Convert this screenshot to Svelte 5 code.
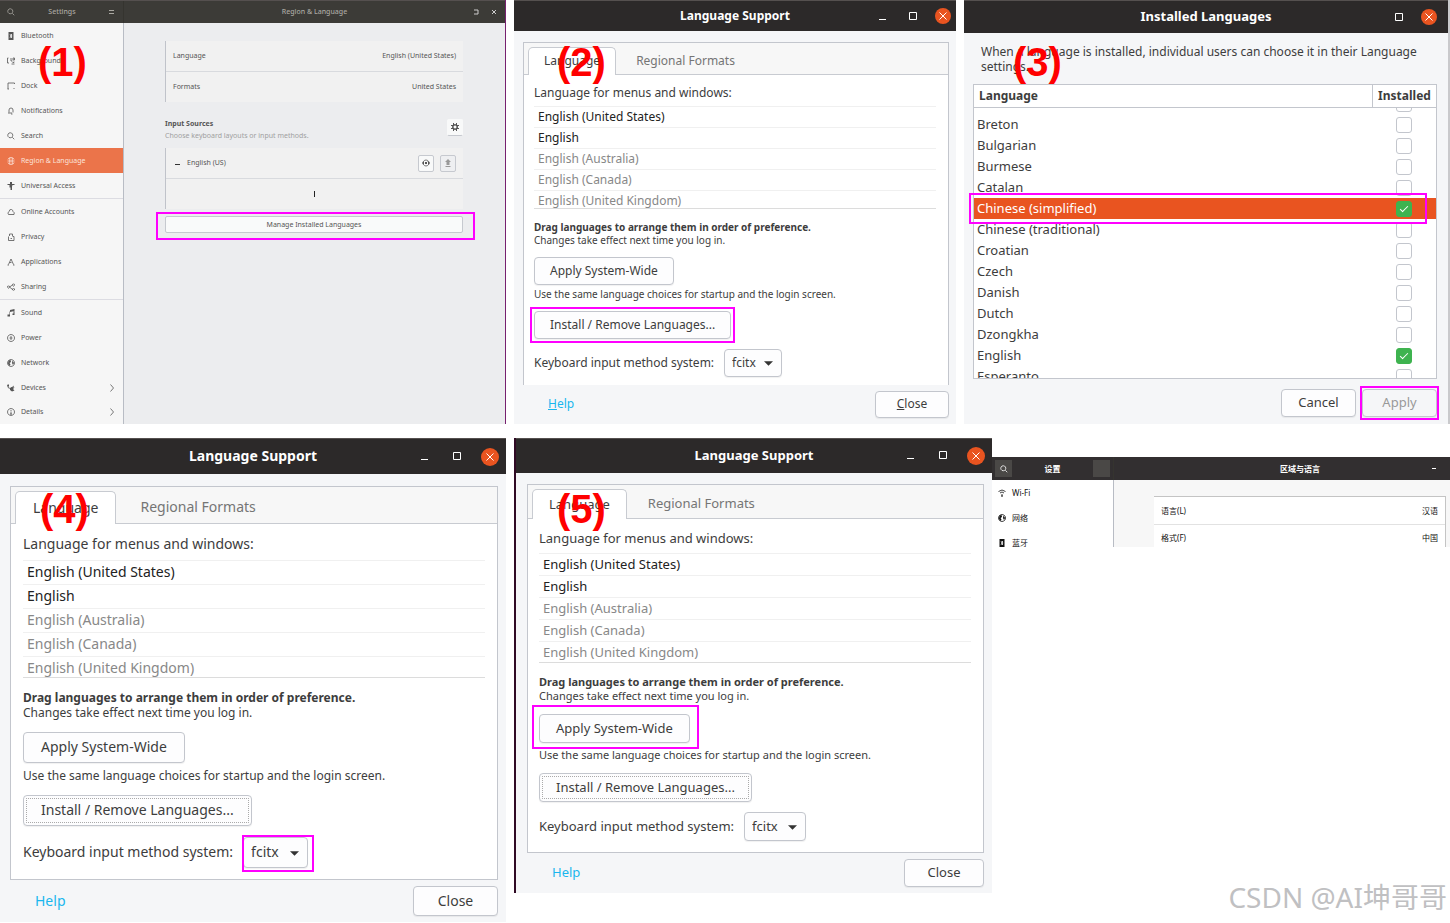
<script>
    // 16x16 symbolic icons, stroke = outline, fill = solid parts
    const icons = {
        bluetooth: { fill: 'M3 0h10v16H3z', cut: 'M6 5l4 5-2 2V4l2 2-4 5' },
        background: { stroke: 'M3 2H1v10h3M9 14h6M8 2v6h3M12 2h3v4h-3zM11 11h3V9' },
        dock: { stroke: 'M2 14V2h13v2M1 14h3M14 12v2' },
        bell: { stroke: 'M4 11V6q0-4 4-4t4 4v5M2 12h8M8 14h3' },
        search: { stroke: 'M6.500 1.500a5 5 0 1 0 .1 0M10.500 10.500l4 4' },
        region: { stroke: 'M2 5q1-4 6-4t6 4M1 8h14M2 11q1 4 6 4t6-4M5.500 2v12M10.500 2v12' },
        access: { fill: 'M6 0h4v4h5v2h-4l-1 3v7H7v-5H5V6H1V4h5z' },
        cloud: { stroke: 'M3 13q-3-3 1-6q1-5 5-4q3 1 3 4q4 2 2 6z' },
        privacy: { stroke: 'M5 6V2h6v4M3 7v8h11V7h-3M7 11h3' },
        apps: { stroke: 'M8 2L3 13M8 2l5 11M5 9h4M1 14h3M12 14h3' },
        share: { stroke: 'M13 2a2 2 0 1 0 .1 0M13 11a2 2 0 1 0 .1 0M3 6a2 2 0 1 0 .1 0M5 8l6-4M5 8l6 5' },
        sound: { fill: 'M6 2l9-2v4L6 6zM13 3h2v9h-4v-3h2zM1 11h5v4H1zM5 5h1v7H5z' },
        power: { stroke: 'M8 1a7 7 0 1 0 .1 0M8 4v8M5 8h6' },
        network: { stroke: 'M8 1a7 7 0 1 0 .1 0', fill: 'M3 3l4-1 1 4-3 2 2 3-2 3-3-4zM11 3l3 5-2 4-2-4z' },
        devices: { stroke: 'M1 2l2 6 5 1M7 9l7-5', fill: 'M6 8l4-2 5 1-3 3 3 3-5 2-4-3zM1 1h3v4H1z' },
        details: { stroke: 'M8 1a7 7 0 1 0 .1 0M8 4v2M8 7v6M6 12h4' },
        wifi: { stroke: 'M1 5q7-6 14 0M4 8q4-4 8 0M8 10v5M6 14h4' },
        gear: { stroke: 'M8 3.500a4.500 4.500 0 1 0 .1 0', fill: 'M4 0h2v4H4zM10 0h2v4h-2zM4 12h2v4H4zM10 12h2v4h-2zM0 4h4v2H0zM0 10h4v2H0zM12 4h4v2h-4zM12 10h4v2h-4z' },
        eye: { stroke: 'M8 2a6 6 0 1 0 .1 0M8 8l3-3', fill: 'M0 8l4-4v8zM16 8l-4-4v8zM6 6h4v4H6z' },
        up: { fill: 'M8 0l6 6h-3v6H5V6H2zM3 14h10v2H3z' }
    };

    const sidebar = [
        [
            ['Bluetooth', 'bluetooth'],
            ['Background', 'background'],
            ['Dock', 'dock'],
            ['Notifications', 'bell'],
            ['Search', 'search'],
            ['Region & Language', 'region'],
            ['Universal Access', 'access']
        ],
        [
            ['Online Accounts', 'cloud'],
            ['Privacy', 'privacy'],
            ['Applications', 'apps'],
            ['Sharing', 'share']
        ],
        [
            ['Sound', 'sound'],
            ['Power', 'power'],
            ['Network', 'network'],
            ['Devices', 'devices', true],
            ['Details', 'details', true]
        ]
    ];

    const menuLanguages = [
        'English (United States)',
        'English',
        'English (Australia)',
        'English (Canada)',
        'English (United Kingdom)'
    ];

    let installed = $state([
        { name: 'Bosnian', on: false },
        { name: 'Breton', on: false },
        { name: 'Bulgarian', on: false },
        { name: 'Burmese', on: false },
        { name: 'Catalan', on: false },
        { name: 'Chinese (simplified)', on: true },
        { name: 'Chinese (traditional)', on: false },
        { name: 'Croatian', on: false },
        { name: 'Czech', on: false },
        { name: 'Danish', on: false },
        { name: 'Dutch', on: false },
        { name: 'Dzongkha', on: false },
        { name: 'English', on: true },
        { name: 'Esperanto', on: false }
    ]);
    let selected = $state('Chinese (simplified)');

    // open the list a little scrolled down
    const scrollTo = (node, top) => {
        node.scrollTop = top;
    };
</script>

{#snippet icon(name)}
    <svg class="icon" viewBox="0 0 16 16" aria-hidden="true">
        {#if icons[name].fill}<path d={icons[name].fill} fill="currentColor" />{/if}
        {#if icons[name].stroke}<path d={icons[name].stroke} fill="none" stroke="currentColor" stroke-width={name === 'gear' ? 3 : 1.6} />{/if}
        {#if icons[name].cut}<path d={icons[name].cut} fill="none" stroke="#fff" stroke-width="1.400" />{/if}
    </svg>
{/snippet}

{#snippet controls(minimize)}
    <div class="controls">
        {#if minimize}
            <button aria-label="Minimize"><svg viewBox="0 0 10 10"><path d="M1 8.500h7" /></svg></button>
        {/if}
        <button aria-label="Maximize"><svg viewBox="0 0 10 10"><path d="M1.500 1.500h7v7h-7z" /></svg></button>
        <button class="close" aria-label="Close window"><svg viewBox="0 0 10 10"><path d="M1.500 1.500l7 7M8.500 1.500l-7 7" /></svg></button>
    </div>
{/snippet}

{#snippet support(size, number, ring, underline)}
    <section class="window support {size}">
        <header class="titlebar">
            <h2>Language Support</h2>
            {@render controls(true)}
        </header>
        <div class="notebook">
            <div class="tabs" role="tablist">
                <button class="tab active" role="tab" aria-selected="true">Language</button>
                <button class="tab" role="tab" aria-selected="false">Regional Formats</button>
            </div>
            <div class="page">
                <p class="caption">Language for menus and windows:</p>
                <ul class="languages">
                    {#each menuLanguages as language, i}
                        <li class:dim={i > 1}>{language}</li>
                    {/each}
                </ul>
                <p class="note first"><b>Drag languages to arrange them in order of preference.</b><br />Changes take effect next time you log in.</p>
                <div class="holder" class:ring={ring === 'apply'} class:wide={ring === 'apply'}>
                    <button class="btn">Apply System-Wide</button>
                </div>
                <p class="note second">Use the same language choices for startup and the login screen.</p>
                <div class="holder" class:ring={ring === 'install'}>
                    <button class="btn" class:focused={ring !== 'install'}>Install / Remove Languages...</button>
                </div>
                <div class="method">
                    <label for="method-{size}">Keyboard input method system:</label>
                    <div class="holder select" class:ring={ring === 'method'} class:tight={ring === 'method'}>
                        <select id="method-{size}"><option>fcitx</option></select>
                        <svg class="caret" viewBox="0 0 10 5" aria-hidden="true"><path d="M0 0h10L5 5z" /></svg>
                    </div>
                </div>
            </div>
        </div>
        <footer>
            {#if underline}
                <a href="#help"><u>H</u>elp</a>
                <button class="btn"><u>C</u>lose</button>
            {:else}
                <a href="#help">Help</a>
                <button class="btn">Close</button>
            {/if}
        </footer>
        <span class="number">{number}</span>
    </section>
{/snippet}

<main>
    <div class="row upper">
        <section class="window settings">
            <header class="titlebar">
                <div class="side-title">
                    {@render icon('search')}
                    <h2>Settings</h2>
                    <button class="menu" aria-label="Menu"></button>
                </div>
                <h2>Region &amp; Language</h2>
                <div class="small-controls">
                    <button aria-label="Maximize"><svg viewBox="0 0 6 6"><path d="M1 1h4v4H1" /></svg></button>
                    <button aria-label="Close window"><svg viewBox="0 0 6 6"><path d="M1 1l4 4M5 1L1 5" /></svg></button>
                </div>
            </header>
            <div class="split">
                <nav>
                    {#each sidebar as group}
                        <ul>
                            {#each group as [label, name, arrow]}
                                <li>
                                    <a href="#{name}" class:current={name === 'region'}>
                                        {@render icon(name)}
                                        <span>{label}</span>
                                        {#if arrow}<svg class="arrow" viewBox="0 0 4 8"><path d="M0.500 0.500l3 3.500l-3 3.500" /></svg>{/if}
                                    </a>
                                </li>
                            {/each}
                        </ul>
                    {/each}
                </nav>
                <div class="content">
                    <div class="panel">
                        <div class="line"><span>Language</span><span>English (United States)</span></div>
                        <div class="line"><span>Formats</span><span>United States</span></div>
                    </div>
                    <div class="sources">
                        <div>
                            <h3>Input Sources</h3>
                            <p>Choose keyboard layouts or input methods.</p>
                        </div>
                        <button class="mini" aria-label="Input source options">{@render icon('gear')}</button>
                    </div>
                    <div class="panel">
                        <div class="line">
                            <span class="dash"></span>
                            <span class="grow">English (US)</span>
                            <button class="mini" aria-label="Show layout">{@render icon('eye')}</button>
                            <button class="mini off" aria-label="Move up" disabled>{@render icon('up')}</button>
                        </div>
                        <button class="line add" aria-label="Add input source"><span></span></button>
                    </div>
                    <div class="holder ring manage">
                        <button>Manage Installed Languages</button>
                    </div>
                </div>
            </div>
            <span class="number">(1)</span>
        </section>

        {@render support('small', '(2)', 'install', true)}

        <section class="window installed">
            <header class="titlebar">
                <h2>Installed Languages</h2>
                {@render controls(false)}
            </header>
            <p class="intro">When a language is installed, individual users can choose it in their Language settings.</p>
            <div class="frame">
                <div class="scroller" use:scrollTo={15}>
                    <table>
                        <thead>
                            <tr><th>Language</th><th class="state">Installed</th></tr>
                        </thead>
                        <tbody>
                            {#each installed as language}
                                <tr class:selected={language.name === selected} onclick={() => (selected = language.name)}>
                                    <td>{language.name}</td>
                                    <td class="state"><input type="checkbox" aria-label={language.name} bind:checked={language.on} /></td>
                                </tr>
                            {/each}
                        </tbody>
                    </table>
                </div>
            </div>
            <footer>
                <button class="btn">Cancel</button>
                <div class="holder ring snug"><button class="btn" disabled>Apply</button></div>
            </footer>
            <span class="number">(3)</span>
        </section>
    </div>

    <div class="row lower">
        {@render support('large', '(4)', 'method', false)}
        <div class="pair">
            {@render support('medium', '(5)', 'apply', false)}
            <section class="window chinese" lang="zh-CN">
                <header class="titlebar">
                    <div class="side-title">
                        <button class="square" aria-label="搜索">{@render icon('search')}</button>
                        <h2>设置</h2>
                        <button class="square" aria-label="菜单"></button>
                    </div>
                    <h2>区域与语言</h2>
                    <button class="minimize" aria-label="最小化"></button>
                </header>
                <div class="split">
                    <nav>
                        <ul>
                            <li><a href="#wifi">{@render icon('wifi')}<span>Wi-Fi</span></a></li>
                            <li><a href="#net">{@render icon('network')}<span>网络</span></a></li>
                            <li><a href="#bt">{@render icon('bluetooth')}<span>蓝牙</span></a></li>
                        </ul>
                    </nav>
                    <div class="content">
                        <div class="panel">
                            <div class="line"><span>语言(L)</span><span>汉语</span></div>
                            <div class="line"><span>格式(F)</span><span>中国</span></div>
                        </div>
                    </div>
                </div>
            </section>
        </div>
    </div>
    <p class="watermark">CSDN @AI坤哥哥</p>
</main>

<style>
    :global(body) {
        background: #fff;
    }
    main {
        position: relative;
        font-family: "Noto Sans", "Noto Sans CJK SC", sans-serif;
        color: #3d3d3d;
    }
    main * {
        box-sizing: border-box;
    }
    h2, h3, p, ul {
        margin: 0;
        padding: 0;
    }
    ul {
        list-style: none;
    }
    button, select {
        font: inherit;
        color: inherit;
        padding: 0;
        border: 0;
        background: none;
    }
    a {
        text-decoration: none;
        color: inherit;
    }
    svg {
        display: block;
    }
    .row {
        display: grid;
        gap: 8px;
    }
    .upper {
        grid-template-columns: minmax(0, 506fr) minmax(0, 442fr) minmax(0, 486fr);
    }
    .lower {
        grid-template-columns: minmax(0, 506fr) minmax(0, 936fr);
        align-items: start;
        margin-top: 14px;
    }
    .pair {
        display: grid;
        grid-template-columns: minmax(0, 478fr) minmax(0, 458fr);
        align-items: start;
    }
    .window {
        position: relative;
        background: #f5f6f8;
    }
    .number {
        position: absolute;
        top: 38px;
        left: 43px;
        font: bold 40px/48px "Liberation Sans", Arial, sans-serif;
        color: #f00;
        pointer-events: none;
    }
    .titlebar {
        display: flex;
        align-items: center;
        position: relative;
        background: #2c2929;
        border-top: 1px solid #55504f;
        color: #fff;
    }
    .titlebar h2 {
        flex: 1;
        text-align: center;
        font-size: inherit;
        font-weight: bold;
    }
    .support .titlebar h2, .installed .titlebar h2 {
        padding-bottom: 2px;
    }

    /* window buttons */
    .controls {
        position: absolute;
        right: 5px;
        display: flex;
        gap: 14px;
    }
    .controls button {
        width: 16px;
        height: 16px;
        display: grid;
        place-items: center;
    }
    .controls svg {
        width: 10px;
        height: 10px;
        fill: none;
        stroke: #fff;
    }
    .controls .close {
        background: #e95420;
        border-radius: 50%;
    }

    /* highlighted controls */
    .holder {
        position: relative;
        width: fit-content;
    }
    .ring::after {
        content: "";
        position: absolute;
        inset: -4px;
        border: 2px solid #f0f;
        pointer-events: none;
    }
    .ring.wide::after {
        inset: -9px -9px -6px -7px;
    }
    .ring.tight::after {
        inset: -2px -6px -4px -1px;
    }
    .ring.snug::after {
        inset: -3px -2px;
    }

    .btn, select {
        background: #fdfdfe;
        border: 1px solid #c3c6cd;
        border-radius: 4px;
        box-shadow: 0 1px 1px #0000000f;
    }
    .btn {
        padding-bottom: 2px;
    }
    .btn:disabled {
        background: #f5f6f8;
        color: #999;
    }

    /* language support */
    .support {
        font-size: var(--text);
        padding: 0 var(--right) 0 var(--left);
    }
    .small {
        --text: 12px;
        --note: 10px;
        --left: 9px;
        --right: 7px;
        --bar: 31px;
        --gap: 11px;
        --tabs: 32px;
        --caption: 31px;
        --item: 21px;
        --list: 103px;
        --line: 13px;
        --button: 28px;
        --space: 10px;
        --inset: 10px;
        --pad: 15px;
        --hint: 3px;
        --method: 10px;
        --end: 8px;
        --arrow: 25px;
        --close: 74px;
        --foot: 38px;
    }
    .medium {
        --text: 13px;
        --note: 11px;
        --left: 11px;
        --right: 8px;
        --bar: 35px;
        --gap: 11px;
        --tabs: 34px;
        --caption: 34px;
        --item: 22px;
        --list: 110px;
        --line: 14px;
        --button: 29px;
        --space: 11px;
        --inset: 11px;
        --pad: 16px;
        --hint: 5px;
        --method: 10px;
        --end: 11px;
        --arrow: 27px;
        --close: 80px;
        --foot: 40px;
        border-left: 2px solid #300a24;
    }
    .large {
        --text: 14px;
        --note: 12px;
        --left: 10px;
        --right: 8px;
        --bar: 36px;
        --gap: 12px;
        --tabs: 37px;
        --caption: 36px;
        --item: 24px;
        --list: 118px;
        --line: 15px;
        --button: 31px;
        --space: 12px;
        --inset: 12px;
        --pad: 17px;
        --hint: 5px;
        --method: 11px;
        --end: 11px;
        --arrow: 28px;
        --close: 85px;
        --foot: 42px;
    }
    .support .titlebar {
        height: var(--bar);
        margin: 0 calc(0px - var(--right)) var(--gap) calc(0px - var(--left));
    }
    .lower .controls {
        right: 7px;
        gap: 16px;
    }
    .lower .controls .close {
        width: 18px;
        height: 18px;
    }
    .notebook {
        border: 1px solid #c3c6cd;
        background: #fff;
    }
    .small .notebook {
        border-bottom: 0;
    }
    .tabs {
        display: flex;
        align-items: flex-end;
        height: var(--tabs);
        padding-left: 4px;
        background: #f7f7f7;
        border-bottom: 1px solid #c8cbd1;
    }
    .tab {
        height: calc(var(--tabs) - 4px);
        margin-bottom: -1px;
        padding: 0 calc(var(--pad) + 5px) 2px;
        color: #757575;
    }
    .tab.active {
        background: #fff;
        color: #3d3d3d;
        border: 1px solid #c8cbd1;
        border-bottom: 0;
        border-radius: 5px 5px 0 0;
        padding: 0 var(--pad) 2px;
    }
    .large .tab:not(.active) {
        padding-left: 24px;
    }
    .page {
        padding: 0 12px var(--end) var(--inset);
    }
    .caption {
        line-height: calc(var(--caption) + 4px);
        height: var(--caption);
    }
    .languages {
        height: var(--list);
        overflow: hidden;
        border-bottom: 1px solid #dcdcdc;
        color: #222;
    }
    .languages li {
        height: var(--item);
        line-height: calc(var(--item) - 2px);
        padding-left: 4px;
        border-top: 1px solid #f0f0f0;
    }
    .languages .dim {
        color: #888;
    }
    .note {
        font-size: var(--note);
        line-height: var(--line);
        white-space: nowrap;
    }
    .first {
        margin: 12px 0 var(--space);
    }
    .second {
        margin: var(--hint) 0 var(--space);
    }
    .page .btn {
        height: var(--button);
        padding: 0 var(--pad) 2px;
    }
    .focused {
        outline: 1px dotted #aaa;
        outline-offset: -4px;
    }
    .method {
        display: flex;
        align-items: center;
        gap: 10px;
        margin-top: var(--method);
        height: var(--button);
    }
    .method label {
        padding-bottom: 2px;
    }
    select {
        appearance: none;
        height: var(--button);
        padding: 0 var(--arrow) 2px 7px;
    }
    .caret {
        position: absolute;
        right: 9px;
        top: calc(50% - 2px);
        width: 9px;
        height: 5px;
        fill: #333;
        pointer-events: none;
    }
    footer {
        display: flex;
        align-items: center;
        justify-content: space-between;
    }
    .support footer {
        height: var(--foot);
        padding-left: 25px;
    }
    .support footer a {
        padding-bottom: 2px;
        color: #19b6ee;
    }
    .support footer .btn {
        height: calc(var(--button) - 1px);
        width: var(--close);
    }
    .large .number {
        top: 47px;
        left: 40px;
    }
    .medium .number {
        top: 47px;
        left: 41px;
    }

    /* settings */
    .settings, .chinese {
        font-size: 8px;
        line-height: 12px;
        display: flex;
        flex-direction: column;
    }
    .settings {
        font-size: 7px;
        border-right: 1px solid #77216f;
        background: #ecedef;
        color: #555;
    }
    .settings .titlebar {
        height: 23px;
        background: #3c3b37;
        color: #aaa8a2;
    }
    .settings .titlebar h2 {
        font-weight: 500;
    }
    .side-title {
        width: 124px;
        height: 100%;
        display: flex;
        align-items: center;
        padding: 0 7px;
        border-right: 1px solid #35342f;
    }
    .icon {
        width: 8px;
        height: 8px;
        flex: none;
    }
    .menu {
        width: 5px;
        height: 4px;
        border: solid #aaa8a2;
        border-width: 1px 0;
        margin-right: 2px;
    }
    .small-controls {
        position: absolute;
        right: 8px;
        display: flex;
        gap: 12px;
    }
    .small-controls svg {
        width: 6px;
        height: 6px;
        fill: none;
        stroke: #ccc;
    }
    .split {
        flex: 1;
        display: flex;
        min-height: 0;
    }
    nav {
        width: 124px;
        flex: none;
        background: #f6f6f6;
        border-right: 1px solid #b8bcc4;
    }
    nav ul + ul {
        border-top: 1px solid #dcdce2;
    }
    nav a {
        display: flex;
        align-items: center;
        gap: 6px;
        height: 25px;
        padding: 0 9px 0 7px;
    }
    .settings nav ul:last-child li:last-child a {
        height: 24px;
    }
    nav a span {
        flex: 1;
    }
    .current {
        background: #eb744a;
        color: #fbe3da;
    }
    .arrow {
        width: 4px;
        height: 8px;
        fill: none;
        stroke: #777;
    }
    .content {
        flex: 1;
        padding: 18px 42px 0 41px;
    }
    .panel {
        background: #f1f1f1;
        border-left: 1px solid #c0c3ca;
    }
    .line {
        display: flex;
        align-items: center;
        justify-content: space-between;
        width: 100%;
        height: 30px;
        padding: 0 7px;
    }
    .line + .line {
        border-top: 1px solid #d8dade;
        height: 31px;
    }
    .sources {
        display: flex;
        align-items: center;
        justify-content: space-between;
        margin: 16px 0 6px;
    }
    .sources h3 {
        font-size: inherit;
    }
    .sources p {
        color: #a0a0a0;
    }
    .mini {
        width: 16px;
        height: 17px;
        display: grid;
        place-items: center;
        background: #f8f9f9;
        border: 1px solid #c6c9cf;
        border-radius: 2px;
    }
    .sources .mini {
        margin-bottom: 6px;
        border-color: #f8f9f9 #f8f9f9 #c6c9cf;
    }
    .off {
        margin-left: 6px;
        background: #eeeff1;
        color: #999;
    }
    .dash {
        width: 5px;
        height: 1px;
        margin: 3px 7px 0 2px;
        background: #333;
    }
    .grow {
        flex: 1;
    }
    .line.add {
        justify-content: center;
    }
    .add span {
        width: 1px;
        height: 6px;
        background: #222;
    }
    .manage {
        width: auto;
        margin-top: 7px;
    }
    .manage.ring::after {
        inset: -4px -12px -7px -9px;
    }
    .manage button {
        display: block;
        width: 100%;
        height: 17px;
        background: #f9fafa;
        border: 1px solid #c6c9cf;
        border-radius: 2px;
    }
    .settings .number {
        left: 38px;
    }

    /* installed languages */
    .installed {
        font-size: 13px;
        padding: 0 11px 0 9px;
        border-right: 2px solid #c9c9cc;
    }
    .installed .titlebar {
        height: 33px;
        margin: 0 -11px 0 -9px;
    }
    .installed .controls {
        right: 11px;
    }
    .intro {
        padding: 11px 0 10px 8px;
        font-size: 12px;
        line-height: 15px;
    }
    .frame {
        position: relative;
        border: 1px solid #c3c6cd;
        background: #fff;
    }
    .frame::after {
        content: "";
        position: absolute;
        top: 108px;
        left: -5px;
        right: 9px;
        height: 27px;
        border: 2px solid #f0f;
        pointer-events: none;
    }
    .scroller {
        height: 293px;
        overflow: hidden;
    }
    table {
        width: 100%;
        border-spacing: 0;
    }
    th {
        position: sticky;
        top: 0;
        z-index: 1;
        height: 23px;
        padding: 0 5px 2px;
        text-align: left;
        font-size: 12px;
        line-height: 15px;
        background: #fff;
        border-bottom: 1px solid #c3c6cd;
    }
    th.state {
        border-left: 1px solid #c3c6cd;
    }
    td {
        height: 21px;
        padding: 0 3px;
        line-height: 17px;
    }
    .state {
        width: 64px;
        text-align: center;
    }
    .selected {
        background: #e95420;
        color: #fff;
    }
    input {
        appearance: none;
        display: grid;
        place-items: center;
        width: 16px;
        height: 16px;
        margin: 0 auto;
        background: #fff;
        border: 1px solid #c3c6cd;
        border-radius: 3px;
    }
    input:checked {
        background: #3eb34f;
        border-color: #3eb34f;
    }
    input:checked::after {
        content: "";
        width: 7px;
        height: 3px;
        border: solid #fff;
        border-width: 0 0 1px 1px;
        transform: translateY(-1px) rotate(-45deg);
    }
    .installed footer {
        justify-content: flex-end;
        gap: 6px;
        padding: 10px 0 0;
    }
    .installed footer .btn {
        display: block;
        height: 28px;
        min-width: 75px;
    }
    .installed .number {
        left: 49px;
    }

    /* chinese settings */
    .chinese {
        margin-top: 19px;
        background: #f7f7f7;
        color: #111;
    }
    .chinese .titlebar {
        height: 23px;
        border-top: 0;
        background: #322f30;
    }
    .chinese .side-title {
        width: 122px;
        padding: 0 3px;
    }
    .chinese > .titlebar > h2 {
        padding-left: 36px;
    }
    .square {
        width: 17px;
        height: 17px;
        display: grid;
        place-items: center;
        background: #4a4846;
    }
    .minimize {
        position: absolute;
        right: 14px;
        width: 4px;
        height: 1px;
        background: #fff;
    }
    .chinese nav {
        width: 122px;
        background: #fff;
    }
    .chinese nav a {
        padding-left: 6px;
    }
    .chinese nav ul {
        height: 67px;
        overflow: hidden;
    }
    .chinese .content {
        padding: 16px 4px 0 40px;
    }
    .chinese .panel {
        background: #fff;
        border: solid #c4c4c4;
        border-width: 1px 1px 0 0;
    }
    .chinese .line {
        height: 27px;
    }
    .chinese .line + .line {
        height: 23px;
        padding-top: 4px;
        border-top: 1px solid #e2e2e2;
    }

    .watermark {
        position: absolute;
        right: 3px;
        bottom: 5px;
        font-size: 28px;
        line-height: 40px;
        color: #c0c0c2;
    }
</style>
